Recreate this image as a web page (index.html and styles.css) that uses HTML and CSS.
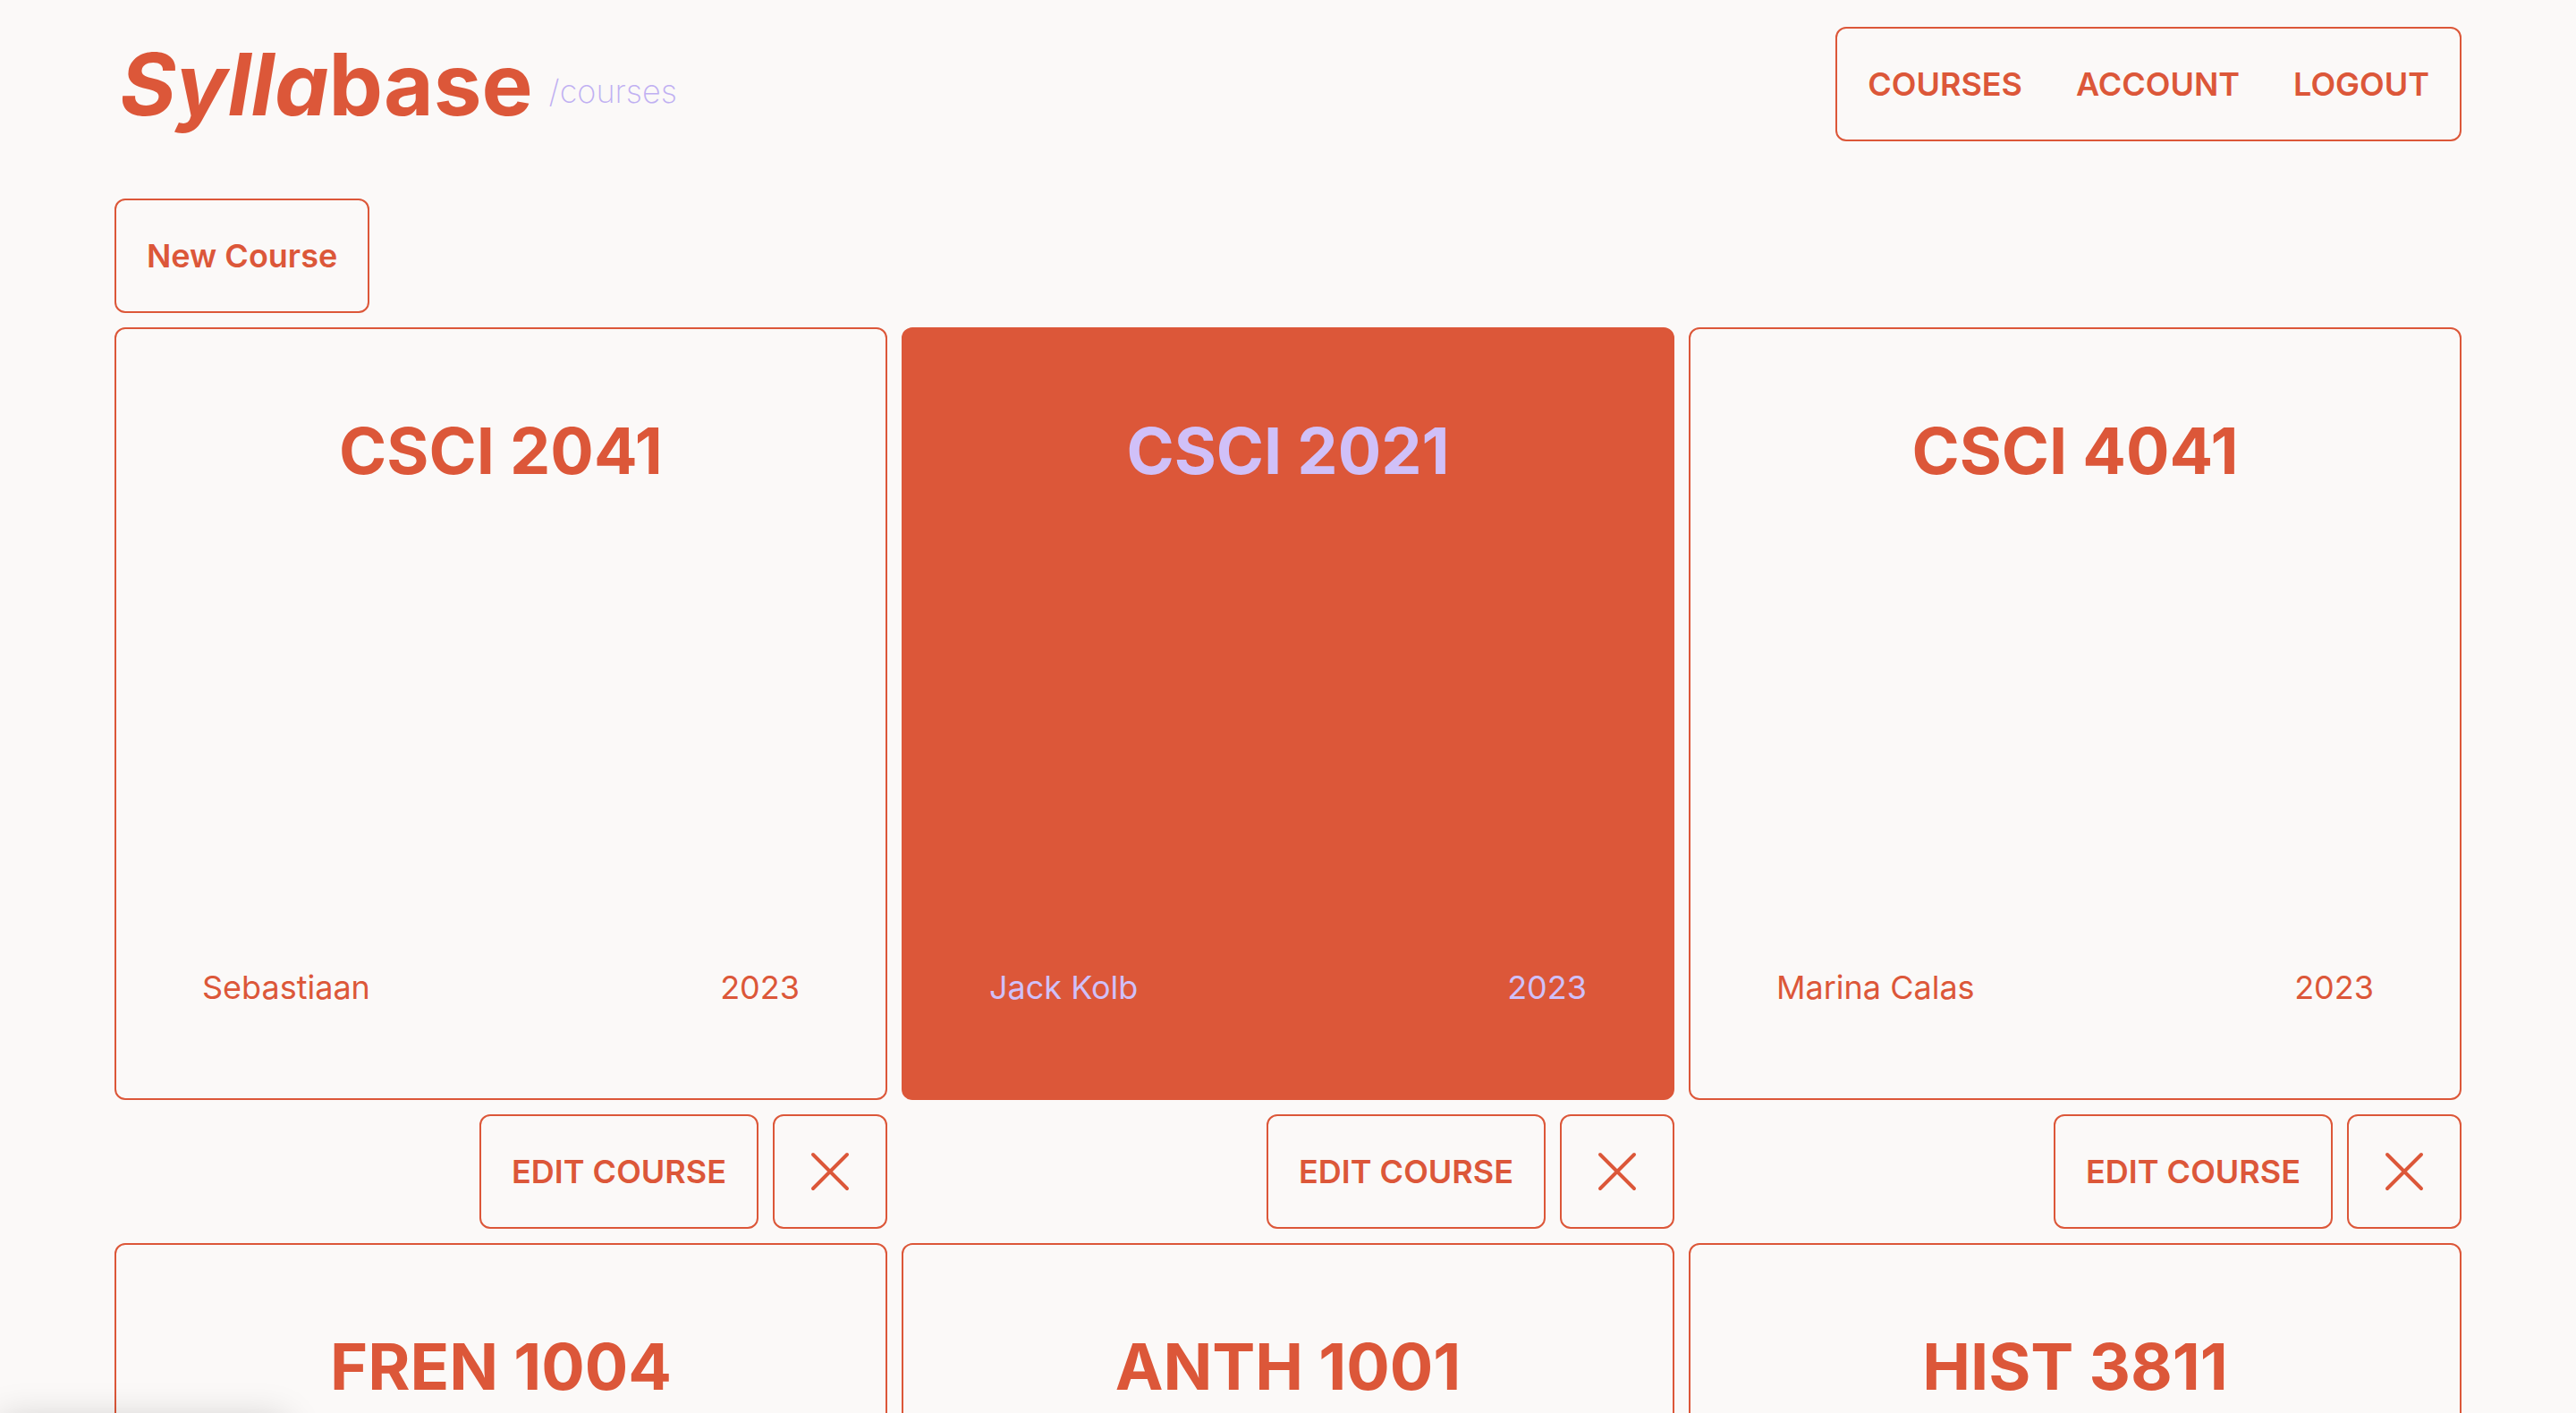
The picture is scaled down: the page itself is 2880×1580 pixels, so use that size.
FILE: index.html
```html
<!DOCTYPE html>
<html lang="en">
<head>
<meta charset="utf-8">
<meta name="viewport" content="width=device-width, initial-scale=1">
<title>Syllabase</title>
<link rel="stylesheet" href="styles.css">
</head>
<body>
<svg class="sprite" aria-hidden="true">
  <symbol id="cross" viewBox="0 0 24 24"><path d="M6 18L18 6M6 6l12 12"/></symbol>
</svg>
<header class="header">
  <div class="brand">
    <a class="logo" href="#"><em>Sylla</em>base</a>
    <span class="path">/courses</span>
  </div>
  <nav class="nav box">
    <a href="#">COURSES</a>
    <a href="#">ACCOUNT</a>
    <a href="#">LOGOUT</a>
  </nav>
</header>
<main class="main">
  <button class="button box" type="button">New Course</button>
  <div class="grid">
    <article class="course">
      <a class="card box" href="#"><h2>CSCI 2041</h2><span class="meta"><span>Sebastiaan</span><span>2023</span></span></a>
      <div class="actions"><button class="button box" type="button">EDIT COURSE</button><button class="button box icon" type="button" aria-label="Delete CSCI 2041"><svg><use href="#cross"/></svg></button></div>
    </article>
    <article class="course">
      <a class="card box active" href="#"><h2>CSCI 2021</h2><span class="meta"><span>Jack Kolb</span><span>2023</span></span></a>
      <div class="actions"><button class="button box" type="button">EDIT COURSE</button><button class="button box icon" type="button" aria-label="Delete CSCI 2021"><svg><use href="#cross"/></svg></button></div>
    </article>
    <article class="course">
      <a class="card box" href="#"><h2>CSCI 4041</h2><span class="meta"><span>Marina Calas</span><span>2023</span></span></a>
      <div class="actions"><button class="button box" type="button">EDIT COURSE</button><button class="button box icon" type="button" aria-label="Delete CSCI 4041"><svg><use href="#cross"/></svg></button></div>
    </article>
    <article class="course"><a class="card box" href="#"><h2>FREN 1004</h2></a></article>
    <article class="course"><a class="card box" href="#"><h2>ANTH 1001</h2></a></article>
    <article class="course"><a class="card box" href="#"><h2>HIST 3811</h2></a></article>
  </div>
</main>
<div class="status"></div>
</body>
</html>
```
FILE: styles.css
```css
:root {
  --ink: #dc5739;
  --paper: #fbf9f8;
  --lilac: #d0c0f8;
  --lilac-deep: #c0b0f2;
}
* { box-sizing: border-box; }
html { scrollbar-width: none; }
body {
  margin: 0;
  padding: 30px 128px 0;
  background: var(--paper);
  color: var(--ink);
  font: 400 36px/56px Inter, sans-serif;
}
a { color: inherit; text-decoration: none; }
.sprite { display: none; }
.box {
  border: 2px solid var(--ink);
  border-radius: 12px;
}
.header {
  display: flex;
  justify-content: space-between;
  align-items: center;
}
.brand {
  display: flex;
  align-items: center;
  gap: 18px;
  padding-left: 6px;
}
.logo {
  font-size: 96px;
  line-height: 96px;
  font-weight: 700;
}
.path {
  padding-top: 16px;
  color: var(--lilac-deep);
  font-weight: 200;
}
.nav {
  display: flex;
  align-items: center;
  gap: 60px;
  height: 128px;
  padding: 0 34px;
  font-weight: 600;
}
.main {
  display: flex;
  flex-direction: column;
  align-items: flex-start;
  gap: 16px;
  padding-top: 64px;
}
.button {
  height: 128px;
  padding: 0 34px;
  background: transparent;
  color: inherit;
  font: inherit;
  font-weight: 600;
}
.grid {
  display: grid;
  grid-template-columns: repeat(3, 1fr);
  gap: 16px;
  width: 100%;
}
.course {
  display: flex;
  flex-direction: column;
  gap: 16px;
}
.card {
  display: flex;
  flex-direction: column;
  justify-content: space-between;
  aspect-ratio: 1;
  padding: 96px;
}
.card.active {
  background: var(--ink);
  color: var(--lilac);
}
.card h2 {
  margin: 0;
  font-size: 72px;
  line-height: 80px;
  font-weight: 700;
  text-align: center;
}
.meta {
  display: flex;
  justify-content: space-between;
}
.actions {
  display: flex;
  justify-content: flex-end;
  gap: 16px;
}
.icon {
  display: grid;
  place-items: center;
  width: 128px;
  padding: 0;
}
.icon svg {
  width: 76px;
  height: 76px;
  fill: none;
  stroke: currentColor;
  stroke-width: 1.25;
  stroke-linecap: round;
}
/* Only the shadow of the status bar reaches into the window. */
.status {
  position: fixed;
  left: 0;
  top: 100%;
  width: 320px;
  height: 40px;
  box-shadow: 0 6px 40px rgb(0 0 0 / 18%);
}
```
